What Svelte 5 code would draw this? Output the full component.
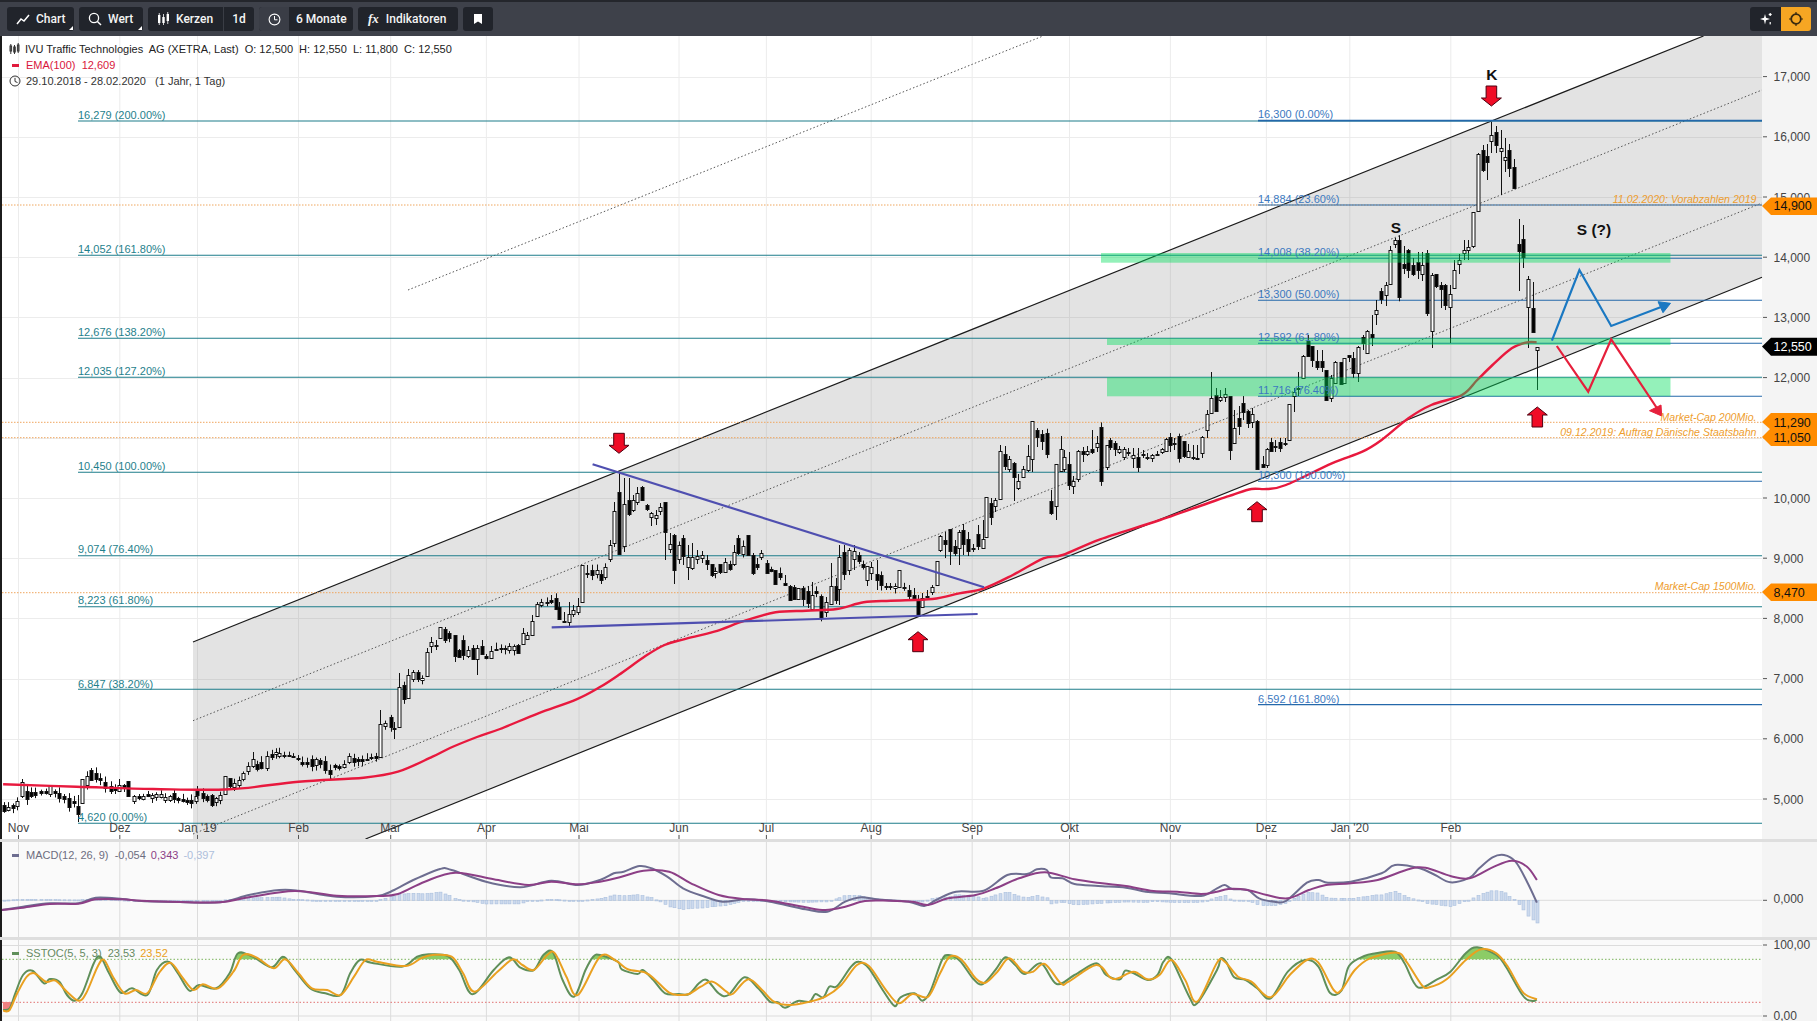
<script>
  // chart geometry, all in page pixels
  const AXIS_X = 1762;
  const months = [
    ['Nov', 18.5], ['Dez', 119.8], ["Jan '19", 197.5], ['Feb', 298.5], ['Mar', 390.7], ['Apr', 486.4],
    ['Mai', 579], ['Jun', 679], ['Jul', 766.4], ['Aug', 871.2], ['Sep', 972.2], ['Okt', 1069.5],
    ['Nov', 1170.4], ['Dez', 1266.4], ["Jan '20", 1349.8], ['Feb', 1450.8]
  ];
  const priceY = (p) => 76.6 + (17 - p) * 60.2;
  const priceTicks = [17, 16, 15, 14, 13, 12, 11, 10, 9, 8, 7, 6, 5];
  const fmt = (p) => p + ',000';

  const fibTeal = [
    ['16,279 (200.00%)', 121, 115], ['14,052 (161.80%)', 255.3, 249], ['12,676 (138.20%)', 338.3, 332],
    ['12,035 (127.20%)', 377.3, 371], ['10,450 (100.00%)', 472.3, 466], ['9,074 (76.40%)', 555.7, 549],
    ['8,223 (61.80%)', 606.7, 600], ['6,847 (38.20%)', 689.3, 683.5], ['4,620 (0.00%)', 823.3, 817]
  ];
  const fibBlue = [
    ['16,300 (0.00%)', 120.7, 114], ['14,884 (23.60%)', 205, 199], ['14,008 (38.20%)', 258.3, 251.7],
    ['13,300 (50.00%)', 300.3, 294.3], ['12,592 (61.80%)', 343.3, 336.7], ['11,716 (76.40%)', 396.3, 390],
    ['10,300 (100.00%)', 481.3, 475], ['6,592 (161.80%)', 704.6, 699]
  ];
  const notes = [
    ['11.02.2020: Vorabzahlen 2019', 199.3], ['Market-Cap 200Mio.', 416.7],
    ['09.12.2019: Auftrag Dänische Staatsbahn', 431.7], ['Market-Cap 1500Mio.', 586]
  ];
  const zones = [[1101, 253, 9.7], [1107, 338.3, 6.7], [1107, 377.3, 19]];
  const arrowsDown = [[1491.4, 86], [619, 433.3]];
  const arrowsUp = [[1257, 501.7], [1537.3, 407], [918, 631.7]];

  // x, body centre, body height, black?, optional wick top and bottom
  const candles = [
    [4,808,6,1],[8,808,3,0],[13,806,3,1],[17,803,5,0],[22,789,14,0,779,798],[27,795,8,1],[31,794,4,1],[35,793,3,1],[41,792,2,1],[46,792,2,1],
    [50,790,8,0,785,797],[55,792,2,1],[59,795,5,1],[64,797,3,1],[69,802,9,1],[74,802,2,1],[78,810,8,1,795,822],[82,791,24,0,779,803],[87,780,9,0],[91,775,10,1,768,780],
    [96,776,6,1],[100,779,2,1],[105,785,6,1],[111,788,5,1],[115,789,2,1],[119,788,6,0,779,792],[124,786,2,1],[128,788,15,1,781,796],[134,798,5,0,795,804],[139,797,2,1],
    [143,797,3,0],[148,795,2,1],[152,796,3,0],[156,795,3,0],[161,795,3,0],[165,798,3,0],[170,798,4,0],[174,796,6,1],[178,799,2,1],[183,800,2,1],
    [187,801,2,1],[191,801,3,1],[196,798,5,0],[197,793,4,1],[203,795,5,1],[207,798,4,1],[212,800,10,1,794,807],[216,800,4,0],[220,797,5,0],[225,785,18,0,778,794],
    [230,782,8,1,778,790],[234,785,4,0],[239,782,5,0],[243,776,6,0],[248,768,5,0],[253,762,7,0,752,768],[257,766,5,1],[261,765,6,1],[267,762,12,0],[272,755,3,1],
    [276,753,2,0],[279,754,3,0],[284,755,1,1],[289,755,1,1],[293,756,1,1],[298,758,1,1],[302,763,2,1],[307,763,2,1],[312,762,7,1],[316,762,6,0],
    [320,762,4,1],[325,765,9,1],[330,772,4,1],[335,766,2,1],[339,767,2,1],[344,765,3,0],[349,759,6,0],[354,760,4,1],[358,760,2,1],[362,760,2,1],
    [367,759,1,1],[371,757,1,1],[376,757,2,1],[380,740,33,0,710,757],[385,724,3,0],[391,722,10,1],[394,728,1,1,722,739],[399,707,40,0,673,727],[404,692,14,1],[408,686,23,0,669,698],
    [413,675,7,0,670,682],[418,675,7,1,670,682],[422,679,2,0],[427,664,24,0,648,677],[431,644,4,0,637,653],[436,645,1,1,640,650],[440,632,11,0,627,637],[445,634,11,1,627,643],[449,635,5,1],[455,645,21,1,635,662],
    [459,653,7,1,649,658],[463,647,15,1],[468,653,6,0],[473,653,11,1,645,658],[477,653,11,0,645,675],[482,650,8,1,640,654],[486,657,2,1],[491,654,7,0,646,658],[496,649,1,1],[501,648,1,1],
    [505,648,1,1],[509,648,4,0],[514,648,4,0],[518,649,8,1,644,654],[523,638,11,0,628,644],[527,637,4,0,632,639],[532,628,14,0,615,634],[537,610,12,0,602,616],[541,603,3,0],[547,602,1,1],
    [551,601,2,1,595,604],[556,603,11,1],[559,613,12,1,602,620],[564,621,1,1,612,622],[569,618,8,0,602,628],[573,612,4,0,605,617],[578,609,6,0,598,615],[582,583,37,0,565,603],[587,573,1,1,565,578],[592,572,5,1],
    [597,572,4,0],[601,577,6,1,570,584],[605,572,10,0],[610,552,14,0,540,562],[614,527,32,0,502,547],[619,523,62,1,473,555],[624,525,42,0,478,552],[629,507,14,1,478,516],[633,505,10,0,495,512],[637,497,9,0,487,505],
    [642,493,13,1,486,501],[647,507,4,1,504,511],[651,515,4,0,512,526],[656,516,3,0,510,525],[660,509,4,0,503,515],[665,517,30,1,502,560],[670,546,5,0,533,553],[674,552,35,1,534,584],[679,552,14,0],[683,547,18,1,535,565],
    [688,562,10,0,545,580],[692,562,11,0,543,570],[697,557,3,0,550,564],[702,556,3,0,551,563],[707,562,4,1,555,570],[712,569,11,1,565,577],[715,572,2,0],[720,568,8,1,565,574],[725,567,10,0,558,572],[730,566,5,1],
    [734,558,12,0,545,566],[738,545,15,1,535,555],[743,550,8,0],[748,545,20,1,535,556],[753,564,18,1,553,575],[757,565,3,1,558,570],[761,555,4,0,550,560],[767,568,10,1,560,574],[771,570,2,1],[775,577,14,1,570,585],
    [780,575,4,1],[785,584,2,1,575,586],[790,593,14,1,585,597],[794,593,12,1,585,600],[798,593,11,0,588,600],[803,593,11,1,586,606],[808,597,12,1,586,608],[812,602,14,0,582,610],[816,592,2,1],[821,607,22,1],
    [826,607,10,0,597,617],[831,595,18,0,563,605],[836,593,14,1,578,604],[839,573,32,0,545,605],[844,563,22,1,545,580],[849,560,20,0,548,575],[854,555,8,0,545,570],[859,558,6,1],[863,565,3,1],[867,573,14,0,566,586],
    [871,570,6,0,562,580],[877,577,6,1,560,590],[881,580,10,1],[886,586,1,1,583,590],[890,586,1,1,583,590],[895,587,2,0],[899,578,17,0,570,588],[904,587,1,1],[909,593,6,1,585,600],[914,596,3,1,588,600],
    [918,608,15,1,595,615],[922,602,9,0,593,607],[927,596,1,1,590,598],[932,589,5,0,585,595],[937,573,24,0,562,582],[940,543,14,0,535,552],[945,542,4,1,532,558],[950,540,22,1,530,565],[955,549,7,1,540,556],[959,540,16,0,530,565],
    [963,537,14,1,524,555],[968,545,12,1,532,556],[973,548,1,1,544,552],[978,540,12,1,525,550],[983,543,9,0,520,548],[986,517,40,0,500,530],[991,510,14,1,498,525],[995,503,6,0,498,512],[1000,475,48,0,445,500],[1005,460,12,1,446,470],
    [1009,464,10,0,456,472],[1014,470,14,1,462,501],[1018,484,7,0,474,490],[1023,473,8,0,466,478],[1028,463,14,0,445,472],[1032,440,38,0,422,472],[1037,433,7,1,428,447],[1042,437,7,1,430,450],[1047,443,21,1],[1051,507,12,1,490,515],
    [1056,485,42,0,472,520],[1061,460,22,0,436,466],[1064,463,12,0,450,472],[1069,474,21,1,452,490],[1073,483,5,0,476,494],[1078,465,28,0,450,482],[1083,452,3,1,447,462],[1087,452,3,0,446,456],[1092,450,3,1,430,454],[1097,445,4,0,436,452],
    [1101,454,54,1],[1107,456,22,0,445,470],[1110,443,7,1,438,450],[1115,446,6,1,441,456],[1119,450,3,0,446,454],[1124,453,8,0,447,460],[1128,452,1,1,448,456],[1133,456,3,0,448,468],[1138,462,10,1,448,472],[1143,454,1,1,450,458],
    [1147,457,1,1,453,460],[1152,456,3,0,454,462],[1157,454,1,1,451,456],[1162,450,3,0,448,454],[1166,445,12,0,438,452],[1170,441,8,1,433,452],[1174,443,1,1,438,450],[1179,447,22,1],[1184,448,15,1,442,458],[1188,454,6,0,444,458],
    [1193,457,1,1,445,460],[1197,458,1,1,445,460],[1202,445,16,0,436,458],[1207,422,16,0,410,438],[1211,405,15,0,372,412],[1216,403,16,1,388,412],[1220,398,3,0,390,402],[1225,395,3,0,388,402],[1230,423,54,1,396,460],[1234,435,15,0,410,443],
    [1239,422,8,1,406,435],[1243,407,9,1,396,420],[1248,417,12,1,410,428],[1252,418,8,0,408,428],[1257,445,48,1,420,470],[1263,465,3,1,456,468],[1267,457,16,0,448,468],[1271,446,9,1,438,452],[1275,446,1,1,440,452],[1280,445,6,1,438,452],
    [1285,443,1,1,438,446],[1289,422,36,0,406,428],[1294,394,4,0,388,412],[1298,388,1,1,372,396],[1303,367,22,0,355,379],[1308,348,15,1,335,356],[1312,353,14,1,347,367],[1317,364,6,1,350,370],[1322,364,6,1,350,372],[1326,385,30,1,370,400],
    [1331,388,20,0,375,402],[1335,372,21,0,361,384],[1341,373,22,1,362,385],[1344,370,25,0,358,384],[1349,356,2,1,355,362],[1353,365,15,1,352,378],[1358,360,26,0,346,382],[1363,340,6,1,335,350],[1367,342,22,0,330,354],[1372,335,3,1,315,346],
    [1376,312,4,0,300,325],[1381,295,8,1,288,304],[1386,290,10,0,282,306],[1390,267,34,0,246,283],[1395,242,4,0,238,248],[1399,268,57,1],[1404,266,4,1,246,274],[1408,260,20,1,249,278],[1413,269,9,1,258,276],[1418,266,8,1,252,279],
    [1422,269,9,0,252,281],[1427,283,60,1,250,316],[1432,303,56,0,273,348],[1436,280,12,1,274,288],[1441,287,4,1,282,308],[1445,295,20,1,284,310],[1450,300,13,0,285,343],[1454,279,18,0,260,289],[1459,262,4,0,254,274],[1464,251,3,0,240,260],
    [1468,248,3,0,240,260],[1473,229,34,0,214,248],[1478,182,57,0,153,212],[1483,160,20,1,145,172],[1487,159,6,1,144,180],[1491,138,6,0,122,153],[1496,138,13,1,126,153],[1501,149,3,0,130,195],[1505,158,3,0,138,172],[1509,159,18,1,144,177],
    [1514,177,21,1,159,187],[1519,247,7,1,219,291],[1523,248,18,1,225,268],[1528,293,28,0,276,348],[1533,320,24,1,282,332],[1537,348,3,0,347,390]
  ];

  const wobble = (x) => Math.abs(Math.sin(x * 12.9898) * 43758.5453) % 1;
  const candleBars = candles.map(([x, c, h, black, hi, lo]) => {
    const top = c - h / 2;
    const bot = c + h / 2;
    return {
      x: Math.round(x) + 0.5,
      top: Math.round(top) + 0.5,
      h: Math.max(1, Math.round(h)),
      black,
      hi: hi ?? top - 1 - wobble(x) * 5,
      lo: lo ?? bot + 1 + wobble(x + 3) * 5
    };
  });

  // lines traced from crops: origin, horizontal scale of the crop, then x,y pairs
  const tr = (ox, oy, sx, flat) => {
    const out = [];
    for (let i = 0; i < flat.length; i += 2) out.push([ox + flat[i] / sx, oy + flat[i + 1] / 3]);
    return out;
  };
  const L = (f) => tr(0, 740, 2.613, f);
  const M = (f) => tr(600, 840, 2.529, f);
  const R = (f) => tr(1217, 740, 2.613, f);
  const join = (a, b, c) => [...a, ...b.filter((p) => p[0] > a[a.length - 1][0] + 1), ...c.filter((p) => p[0] > b[b.length - 1][0] + 1)];

  const ema = [
    ...L([8,133,200,140,400,147,600,148,780,125,950,113,1040,95,1130,50]),
    [450, 748], [477, 737],
    ...tr(500, 430, 2.613, [0,897,100,850,200,808,260,772,310,735,380,678,430,645,480,628,560,605,640,572,720,547,800,542,880,537,950,517,1020,512,1130,507,1200,490,1265,475,1340,435,1420,385,1470,375,1568,328]),
    [1160, 520],
    ...tr(1217, 290, 2.613, [0,630,40,615,90,597,130,597,180,585,300,520,380,485,430,450,500,385,560,345,640,315,680,270,720,225,770,175,810,157,835,157])
  ];

  const macdLine = join(
    L([5,510,60,500,130,490,205,490,250,473,320,477,370,483,470,486,575,487,650,465,730,450,780,452,880,470,985,468,1030,450,1080,420,1150,387,1180,390,1270,425,1360,442,1440,422,1510,435]),
    M([0,120,35,100,60,95,100,78,130,85,170,110,210,145,260,168,310,185,370,178,430,185,520,208,575,215,620,185,660,172,700,178,780,185,820,198,850,180,900,155,970,152,1030,105,1080,102,1105,88,1130,90,1140,112,1170,115,1200,132,1260,138,1330,143,1380,155,1440,160,1520,168]),
    R([0,445,20,435,40,447,80,450,110,475,150,485,180,483,235,428,265,420,290,428,350,425,430,400,465,375,530,385,570,405,610,427,660,413,685,385,720,352,750,345,780,365,810,425,836,488])
  );
  const macdSignal = join(
    L([5,510,60,503,130,492,205,491,250,478,320,478,370,482,470,486,575,487,650,472,770,453,880,467,985,468,1040,462,1110,425,1190,398,1290,418,1380,435,1440,425,1510,433]),
    M([0,125,50,112,110,92,175,95,230,130,300,165,370,178,430,182,520,202,570,210,620,200,670,183,730,182,790,185,830,195,880,175,950,165,1000,145,1060,115,1125,97,1200,118,1270,130,1330,138,1400,153,1460,155,1520,162]),
    R([0,455,30,447,80,450,130,465,185,475,240,450,285,435,350,430,420,420,500,388,545,383,610,408,660,415,720,382,770,362,810,380,836,420])
  );
  const stochK = join(
    L([8,810,25,805,40,760,60,705,85,692,115,730,130,717,155,725,175,765,195,782,215,760,245,670,262,650,285,700,315,758,345,745,385,765,410,690,440,665,465,700,495,752,520,735,565,745,600,700,622,640,660,650,710,682,740,650,770,690,810,745,850,760,890,765,915,700,940,660,970,668,1050,680,1090,650,1120,643,1170,648,1200,690,1235,763,1290,690,1330,652,1360,683,1395,690,1420,645,1445,637,1470,720,1500,770,1530,690,1550,650]),
    M([0,345,45,365,55,388,95,402,108,390,135,420,165,460,200,462,225,462,250,430,270,420,300,460,325,465,365,412,400,445,430,485,450,487,468,503,500,483,530,485,545,462,565,472,580,440,600,438,635,380,655,365,680,385,715,450,745,498,760,472,795,460,815,482,835,455,865,360,882,345,910,362,945,418,968,432,1000,390,1025,352,1050,375,1075,402,1115,370,1155,432,1200,405,1255,370,1280,405,1315,418,1328,392,1350,400,1385,420,1410,405,1425,365,1445,358,1490,470,1510,490]),
    R([0,690,10,655,25,668,45,712,75,720,105,745,140,775,185,695,230,660,265,680,295,758,325,752,345,678,385,648,415,640,465,635,490,670,525,742,575,718,610,695,650,640,680,622,730,645,755,680,800,768,825,783,836,778])
  );
  const stochD = join(
    L([8,812,25,810,45,760,70,710,90,700,120,725,145,722,175,755,205,782,225,760,255,680,272,660,295,710,325,760,355,750,385,760,415,700,445,668,475,710,505,750,530,733,570,745,610,695,635,645,670,652,715,685,745,658,780,700,815,745,855,750,890,765,925,710,955,660,985,665,1060,678,1100,655,1130,645,1180,650,1210,700,1240,755,1300,695,1340,658,1365,675,1395,690,1430,645,1450,640,1480,710,1510,765]),
    M([0,350,40,362,70,388,115,398,140,420,175,458,200,465,225,462,255,440,285,425,320,455,335,462,375,418,410,450,440,485,480,495,530,485,570,470,610,435,650,375,680,378,720,445,755,490,790,462,830,470,860,400,885,350,915,360,950,415,975,428,1005,395,1035,355,1070,395,1095,395,1125,372,1165,430,1185,425,1255,375,1290,412,1310,415,1350,395,1385,418,1415,405,1445,360,1480,420,1510,485]),
    R([0,668,20,665,55,710,90,725,140,772,190,705,235,660,265,668,305,750,325,750,360,690,400,655,470,638,495,665,535,735,555,742,600,718,650,660,690,628,730,640,760,680,800,758,836,778])
  );

  // catmull-rom through the traced points, so the curves don't look like polylines
  const smooth = (list, lead = 'M') => {
    let d = `${lead}${list[0][0].toFixed(1)} ${list[0][1].toFixed(1)}`;
    for (let i = 0; i < list.length - 1; i++) {
      const p0 = list[Math.max(i - 1, 0)];
      const p1 = list[i];
      const p2 = list[i + 1];
      const p3 = list[Math.min(i + 2, list.length - 1)];
      const c1 = [p1[0] + (p2[0] - p0[0]) / 6, p1[1] + (p2[1] - p0[1]) / 6];
      const c2 = [p2[0] - (p3[0] - p1[0]) / 6, p2[1] - (p3[1] - p1[1]) / 6];
      d += `C${c1[0].toFixed(1)} ${c1[1].toFixed(1)} ${c2[0].toFixed(1)} ${c2[1].toFixed(1)} ${p2[0].toFixed(1)} ${p2[1].toFixed(1)}`;
    }
    return d;
  };
  const interp = (list, x) => {
    if (x <= list[0][0]) return list[0][1];
    for (let i = 1; i < list.length; i++) {
      if (x <= list[i][0]) {
        const [x0, y0] = list[i - 1];
        const [x1, y1] = list[i];
        return y0 + ((y1 - y0) * (x - x0)) / (x1 - x0);
      }
    }
    return list[list.length - 1][1];
  };

  const MACD_ZERO = 900.3;
  const macdBars = candles.map(([x]) => {
    const v = interp(macdSignal, x) - interp(macdLine, x);
    return { x: Math.round(x), y: v > 0 ? MACD_ZERO - v : MACD_ZERO, h: Math.max(1, Math.abs(v)) };
  });

  const stochFill = `${smooth(stochK)}L1537 1011L${stochK[0][0].toFixed(1)} 1011Z`;
</script>

<div class="app">
  <header class="toolbar">
    <div class="group">
      <button class="btn corner w-chart">
        <svg width="14" height="14" viewBox="0 0 14 14"><polyline points="1,12 5,7 8,9 13,3" fill="none" stroke="#fff" stroke-width="1.5" /></svg>
        Chart
      </button>
      <button class="btn corner w-wert">
        <svg width="14" height="14" viewBox="0 0 14 14"><circle cx="6" cy="6" r="4.6" fill="none" stroke="#fff" stroke-width="1.3" /><line x1="9.4" y1="9.4" x2="13" y2="13" stroke="#fff" stroke-width="1.4" /></svg>
        Wert
      </button>
      <div class="btn split w-kerzen">
        <span class="part kerzen">
          <svg width="13" height="14" viewBox="0 0 13 14" fill="#fff"><rect x="1" y="3" width="2.4" height="8" /><rect x="1.8" y="1" width=".8" height="12" /><rect x="5.3" y="5" width="2.4" height="6" /><rect x="6.1" y="2" width=".8" height="11" /><rect x="9.6" y="2" width="2.4" height="7" /><rect x="10.4" y="0" width=".8" height="12" /></svg>
          Kerzen
        </span>
        <span class="part day">1d</span>
      </div>
      <div class="btn split w-range">
        <span class="clock">
          <svg width="13" height="13" viewBox="0 0 13 13"><circle cx="6.5" cy="6.5" r="5.4" fill="none" stroke="#fff" stroke-width="1.1" /><polyline points="6.5,3 6.5,6.8 9.5,6.8" fill="none" stroke="#fff" stroke-width="1" /></svg>
        </span>
        <span class="part months">6 Monate</span>
      </div>
      <button class="btn w-ind"><span class="fx">fx</span> Indikatoren</button>
      <button class="btn icon" aria-label="Lesezeichen">
        <svg width="8" height="10" viewBox="0 0 8 10"><polygon points="0,0 8,0 8,10 4,7.6 0,10" fill="#fff" /></svg>
      </button>
    </div>
    <div class="right">
      <button class="btn tool" aria-label="Effekte">
        <svg width="14" height="14" viewBox="0 0 14 14" fill="#fff"><path d="M6 2 L7 5.8 L11 7 L7 8.2 L6 12.5 L5 8.2 L1 7 L5 5.8 Z" /><rect x="10.6" y="1" width="1.2" height="3" /><rect x="9.7" y="1.9" width="3" height="1.2" /><rect x="10.6" y="10" width="1.2" height="2.4" /></svg>
      </button>
      <button class="btn sun" aria-label="Design">
        <svg width="14" height="14" viewBox="0 0 14 14"><circle cx="7" cy="7" r="4.8" fill="none" stroke="#3a2a10" stroke-width="1.8" /><g stroke="#3a2a10" stroke-width="1.2"><line x1="7" y1="0" x2="7" y2="2" /><line x1="7" y1="12" x2="7" y2="14" /><line x1="0" y1="7" x2="2" y2="7" /><line x1="12" y1="7" x2="14" y2="7" /></g></svg>
      </button>
    </div>
  </header>

  <section class="pane main">
    <svg width="1817" height="803" viewBox="0 36 1817 803">
      <rect x={AXIS_X} y="36" width="55" height="803" class="axisbg" />
      {#each priceTicks as p}
        <line x1="2" x2={AXIS_X} y1={Math.round(priceY(p)) + 0.5} y2={Math.round(priceY(p)) + 0.5} class="grid" />
      {/each}
      {#each months as [, x]}
        <line x1={x} x2={x} y1="36" y2="839" class="grid" />
      {/each}

      <polygon points="193,642 1703.5,36 1762,36 1762,277.3 365.5,839 193,839" class="channel" />
      <line x1="193" y1="642" x2="1703.5" y2="36" class="chan" />
      <line x1="365.5" y1="839" x2="1762" y2="277.3" class="chan" />
      <line x1="408" y1="290" x2="1043" y2="36" class="dotgrey" />
      <line x1="193" y1="720.7" x2="1762" y2="90" class="dotgrey" />
      <line x1="193" y1="834" x2="1762" y2="203" class="dotgrey" />

      {#each [205, 422.3, 437.7, 592.7] as y}
        <line x1="2" x2={AXIS_X} y1={y} y2={y} class="dotorange" />
      {/each}

      {#each fibTeal as [, y]}
        <line x1="78" x2={AXIS_X} y1={y} y2={y} class="teal" />
      {/each}
      {#each fibBlue as [, y], i}
        <line x1="1258" x2={AXIS_X} y1={y} y2={y} class="blue" class:thick={i === 0} />
      {/each}

      {#each candleBars as c}
        <line x1={c.x} x2={c.x} y1={c.hi} y2={c.lo} class="wick" />
        <rect x={c.x - 1.5} y={c.top} width="3" height={c.h} class:black={c.black} class="body" />
      {/each}

      <path d={smooth(ema)} class="ema" />

      <line x1="592.6" y1="464.3" x2="984" y2="587.3" class="trend" />
      <line x1="551.7" y1="627.3" x2="977.6" y2="614" class="trend" />

      {#each zones as [x, y, h]}
        <rect x={x} y={y} width={1670.5 - x} height={h} class="zone" />
      {/each}

      <polyline points="1551.9,340.7 1579.4,270 1611.2,326 1667,304.8" class="progblue" />
      <polygon points="1670.5,303.3 1658,301.7 1663,312.7" fill="#1a78c2" stroke="#1a78c2" />
      <polyline points="1556.8,346 1588.2,391.7 1611.2,339.3 1659.5,412" class="progred" />
      <polygon points="1661.7,416 1649.5,410.7 1661,405" fill="#e6203c" stroke="#e6203c" />

      {#each arrowsDown as [x, y]}
        <polygon class="arrow" points="{x - 5.3},{y} {x + 5.3},{y} {x + 5.3},{y + 12} {x + 10},{y + 12} {x},{y + 20} {x - 10},{y + 12} {x - 5.3},{y + 12}" />
      {/each}
      {#each arrowsUp as [x, y]}
        <polygon class="arrow" points="{x - 5.3},{y + 20} {x + 5.3},{y + 20} {x + 5.3},{y + 8} {x + 10},{y + 8} {x},{y} {x - 10},{y + 8} {x - 5.3},{y + 8}" />
      {/each}

      <text x="1491.8" y="79.5" class="mark" text-anchor="middle">K</text>
      <text x="1396" y="232.5" class="mark" text-anchor="middle">S</text>
      <text x="1594" y="234.5" class="mark" text-anchor="middle">S (?)</text>

      {#each fibTeal as [label, , y]}
        <text x="78" y={y + 4} class="lab tealt">{label}</text>
      {/each}
      {#each fibBlue as [label, , y]}
        <text x="1258" y={y + 4} class="lab bluet">{label}</text>
      {/each}
      {#each notes as [label, y]}
        <text x="1756.5" y={y + 4} class="note" text-anchor="end">{label}</text>
      {/each}

      {#each priceTicks as p}
        <line x1="1763" x2="1767" y1={priceY(p)} y2={priceY(p)} class="tick" />
        <text x="1773.5" y={priceY(p) + 4.5} class="axis">{fmt(p)}</text>
      {/each}

      {#each months as [label, x]}
        <line x1={x} x2={x} y1="835" y2="839" class="tick" />
        <text x={x} y="832" class="axis" text-anchor="middle">{label}</text>
      {/each}

      <polygon points="1762,206 1771,197.5 1817,197.5 1817,215 1771,215" fill="#ff8c00" />
      <text x="1773.5" y="210" class="tag">14,900</text>
      <polygon points="1762,346.5 1771,337.7 1817,337.7 1817,355.7 1771,355.7" fill="#000" />
      <text x="1773.5" y="351" class="tag light">12,550</text>
      <polygon points="1762,422 1771,413 1817,413 1817,430 1771,430" fill="#ff8c00" />
      <polygon points="1762,437 1771,428 1817,428 1817,446 1771,446" fill="#ff8c00" />
      <text x="1773.5" y="426.5" class="tag">11,290</text>
      <text x="1773.5" y="442" class="tag">11,050</text>
      <polygon points="1762,592 1771,583.5 1817,583.5 1817,601 1771,601" fill="#ff8c00" />
      <text x="1773.5" y="597" class="tag">8,470</text>

      <rect x="0" y="36" width="2" height="803" fill="#1c1c1c" />
    </svg>

    <div class="legend">
      <div class="row">
        <svg width="11" height="12" viewBox="0 0 11 12"><g stroke="#333" fill="none"><rect x="1" y="3" width="1.6" height="5" /><line x1="1.8" y1="1" x2="1.8" y2="11" /><rect x="4.7" y="4" width="1.6" height="5" /><line x1="5.5" y1="2" x2="5.5" y2="11" /><rect x="8.4" y="2" width="1.6" height="6" /><line x1="9.2" y1="0" x2="9.2" y2="10" /></g></svg>
        <span>IVU Traffic Technologies&nbsp; AG (XETRA, Last)&nbsp; O: 12,500&nbsp; H: 12,550&nbsp; L: 11,800&nbsp; C: 12,550</span>
      </div>
      <div class="row red">
        <i class="dash"></i>
        <span>EMA(100)&nbsp; 12,609</span>
      </div>
      <div class="row dim">
        <svg width="12" height="12" viewBox="0 0 12 12"><circle cx="6" cy="6" r="5" fill="none" stroke="#333" /><polyline points="6,3 6,6.5 8.5,7.5" fill="none" stroke="#333" /></svg>
        <span>29.10.2018 - 28.02.2020 &nbsp; (1 Jahr, 1 Tag)</span>
      </div>
    </div>
  </section>

  <div class="divider"></div>

  <section class="pane sub macd">
    <svg width="1817" height="95" viewBox="0 842 1817 95">
      <rect x={AXIS_X} y="842" width="55" height="95" class="axisbg" />
      {#each months as [, x]}
        <line x1={x} x2={x} y1="842" y2="937" class="grid dark" />
      {/each}
      <line x1="2" x2={AXIS_X} y1={MACD_ZERO} y2={MACD_ZERO} class="grid dark" />
      {#each macdBars as b}
        <rect x={b.x - 1} y={b.y} width="3" height={b.h} class="hist" />
      {/each}
      <path d={smooth(macdLine)} class="ln" stroke="#6d6d90" />
      <path d={smooth(macdSignal)} class="ln" stroke="#8c3f86" />
      <line x1="1763" x2="1767" y1={MACD_ZERO} y2={MACD_ZERO} class="tick" />
      <text x="1773.5" y="903" class="axis">0,000</text>
      <rect x="0" y="842" width="2" height="95" fill="#1c1c1c" />
    </svg>
    <div class="sublabel">
      <i class="dash macd-dash"></i>
      <span class="c-macd">MACD(12, 26, 9)&nbsp; -0,054</span>
      <span class="c-sig">0,343</span>
      <span class="c-hist">-0,397</span>
    </div>
  </section>

  <div class="divider"></div>

  <section class="pane sub stoc">
    <svg width="1817" height="81" viewBox="0 940 1817 81">
      <defs>
        <clipPath id="over"><rect x="0" y="940" width="1762" height="19.3" /></clipPath>
      </defs>
      <rect x={AXIS_X} y="940" width="55" height="81" class="axisbg" />
      {#each months as [, x]}
        <line x1={x} x2={x} y1="940" y2="1021" class="grid dark" />
      {/each}
      <line x1="2" x2={AXIS_X} y1="945.5" y2="945.5" class="grid dark" />
      <line x1="2" x2={AXIS_X} y1="1016" y2="1016" class="grid dark" />
      <line x1="2" x2={AXIS_X} y1="959.3" y2="959.3" class="dotted" stroke="#7bb35a" />
      <line x1="2" x2={AXIS_X} y1="1002.3" y2="1002.3" class="dotted" stroke="#e07070" />
      <path d={stochFill} clip-path="url(#over)" fill="#8ccc66" />
      <polygon points="3,1002 3,1011 9,1010 12,1002" fill="#ee8080" />
      <path d={smooth(stochK)} class="ln" stroke="#5f8f5a" />
      <path d={smooth(stochD)} class="ln" stroke="#e9a020" />
      <line x1="1763" x2="1767" y1="945" y2="945" class="tick" />
      <line x1="1763" x2="1767" y1="1016" y2="1016" class="tick" />
      <text x="1773.5" y="949" class="axis">100,00</text>
      <text x="1773.5" y="1019.5" class="axis">0,00</text>
      <rect x="0" y="940" width="2" height="81" fill="#1c1c1c" />
    </svg>
    <div class="sublabel">
      <i class="dash stoc-dash"></i>
      <span class="c-k">SSTOC(5, 5, 3)&nbsp; 23,53</span>
      <span class="c-d">23,52</span>
    </div>
  </section>
</div>

<style>
  :global(body) {
    margin: 0;
    background: #fff;
  }

  .app {
    width: 1817px;
    height: 1021px;
    overflow: hidden;
    display: flex;
    flex-direction: column;
    font-family: "Liberation Sans", Arial, sans-serif;
  }

  /* toolbar */
  .toolbar {
    flex: none;
    height: 36px;
    box-sizing: border-box;
    border-top: 2px solid #24262c;
    background: #3e414a;
    display: flex;
    justify-content: space-between;
    padding: 5px 6px 0 7px;
  }
  .group {
    display: flex;
    gap: 5px;
  }
  .right {
    display: flex;
  }
  .btn {
    position: relative;
    height: 24px;
    box-sizing: border-box;
    border: 0;
    margin: 0;
    border-radius: 3px;
    background: #21242b;
    color: #f4f4f4;
    font: 500 12px "Roboto", "Liberation Sans", sans-serif;
    display: flex;
    align-items: center;
    gap: 6px;
    padding: 0 0 0 9px;
  }
  .w-chart {
    width: 67px;
  }
  .w-wert {
    width: 64px;
  }
  .w-kerzen {
    width: 106px;
  }
  .w-range {
    width: 94px;
  }
  .w-ind {
    width: 100px;
    padding-left: 10px;
    gap: 7px;
  }
  .corner::after {
    content: "";
    position: absolute;
    right: 1px;
    bottom: 1px;
    border: 2.5px solid transparent;
    border-right-color: #fff;
    border-bottom-color: #fff;
  }
  .split {
    padding: 0;
    gap: 0;
  }
  .part {
    display: flex;
    align-items: center;
    gap: 6px;
    height: 100%;
  }
  .kerzen {
    width: 75px;
    padding-left: 9px;
    box-sizing: border-box;
  }
  .day {
    flex: 1;
    justify-content: center;
    border-left: 1px solid #3a3d45;
  }
  .clock {
    width: 30px;
    height: 100%;
    background: #3a3d46;
    border-radius: 3px 0 0 3px;
    display: flex;
    align-items: center;
    justify-content: center;
  }
  .months {
    padding-left: 7px;
  }
  .fx {
    font: italic 700 13px "Liberation Serif", serif;
  }
  .icon {
    width: 30px;
    justify-content: center;
    padding: 0;
  }
  .tool {
    width: 31px;
    justify-content: center;
    padding: 0;
    border-radius: 3px 0 0 3px;
  }
  .sun {
    width: 30px;
    justify-content: center;
    padding: 0;
    background: #f6a623;
    border-radius: 0 3px 3px 0;
  }

  /* panes */
  .pane {
    position: relative;
    flex: none;
  }
  .pane svg {
    display: block;
  }
  .main {
    height: 803px;
    background: #fff;
  }
  .sub {
    background: #fafafa;
  }
  .macd {
    height: 95px;
  }
  .stoc {
    height: 81px;
  }
  .divider {
    height: 3px;
    flex: none;
    background: #dedede;
  }

  .legend {
    position: absolute;
    left: 9px;
    top: 5px;
    font-size: 11px;
    line-height: 16px;
    color: #222;
  }
  .row {
    display: flex;
    align-items: center;
    gap: 5px;
  }
  .row.red {
    color: #d9163c;
  }
  .row.dim {
    color: #333;
  }
  .dash {
    display: inline-block;
    width: 7px;
    height: 3px;
    background: #e01a3c;
    margin: 0 2px 0 3px;
  }
  .macd-dash {
    background: #6d6d90;
  }
  .stoc-dash {
    background: #5f8f5a;
  }
  .sublabel {
    position: absolute;
    left: 9px;
    top: 5px;
    display: flex;
    align-items: center;
    gap: 5px;
    font-size: 11px;
    line-height: 16px;
  }
  .c-macd {
    color: #6d6d80;
  }
  .c-sig {
    color: #8c3f86;
  }
  .c-hist {
    color: #aebfdc;
  }
  .c-k {
    color: #668a62;
  }
  .c-d {
    color: #e9a020;
  }

  /* chart parts */
  .axisbg {
    fill: #f4f4f4;
  }
  .grid {
    stroke: #ececec;
    stroke-width: 1;
  }
  .grid.dark {
    stroke: #dcdcdc;
  }
  .channel {
    fill: rgba(100, 100, 100, 0.18);
  }
  .chan {
    stroke: #1b1b1b;
    stroke-width: 1.2;
  }
  .dotgrey {
    stroke: #555;
    stroke-width: 1;
    stroke-dasharray: 1.5 2.2;
  }
  .dotorange {
    stroke: #efa65e;
    stroke-width: 1;
    stroke-dasharray: 1.5 1.5;
  }
  .dotted {
    stroke-width: 1;
    stroke-dasharray: 1.5 2;
  }
  .teal {
    stroke: #1c7d8a;
    stroke-width: 1.1;
  }
  .blue {
    stroke: #2468aa;
    stroke-width: 1.1;
  }
  .blue.thick {
    stroke-width: 1.7;
  }
  .ema {
    fill: none;
    stroke: #e8193e;
    stroke-width: 2.4;
    stroke-linejoin: round;
  }
  .wick {
    stroke: #111;
    stroke-width: 1;
  }
  .body {
    fill: #fff;
    stroke: #111;
    stroke-width: 1;
  }
  .body.black {
    fill: #000;
  }
  .trend {
    stroke: #4f4fb0;
    stroke-width: 2.2;
  }
  .zone {
    fill: rgba(0, 222, 90, 0.42);
  }
  .progblue {
    fill: none;
    stroke: #1a78c2;
    stroke-width: 2.2;
  }
  .progred {
    fill: none;
    stroke: #e6203c;
    stroke-width: 2.2;
  }
  .arrow {
    fill: #f00c26;
    stroke: #4d0010;
    stroke-width: 1;
  }
  .mark {
    font-size: 15.5px;
    font-weight: 700;
    fill: #111;
  }
  .lab {
    font-size: 11px;
  }
  .tealt {
    fill: #1f7f8c;
  }
  .bluet {
    fill: #3b78c0;
  }
  .note {
    font-size: 10.6px;
    font-style: italic;
    fill: #ee9d2e;
  }
  .axis {
    font-size: 12px;
    fill: #444;
  }
  .tag {
    font-size: 12.5px;
    fill: #111;
  }
  .tag.light {
    fill: #fff;
  }
  .tick {
    stroke: #555;
    stroke-width: 1;
  }
  .hist {
    fill: #ccd9ed;
    stroke: #a8bedd;
    stroke-width: 0.6;
  }
  .ln {
    fill: none;
    stroke-width: 2;
    stroke-linejoin: round;
  }
</style>
